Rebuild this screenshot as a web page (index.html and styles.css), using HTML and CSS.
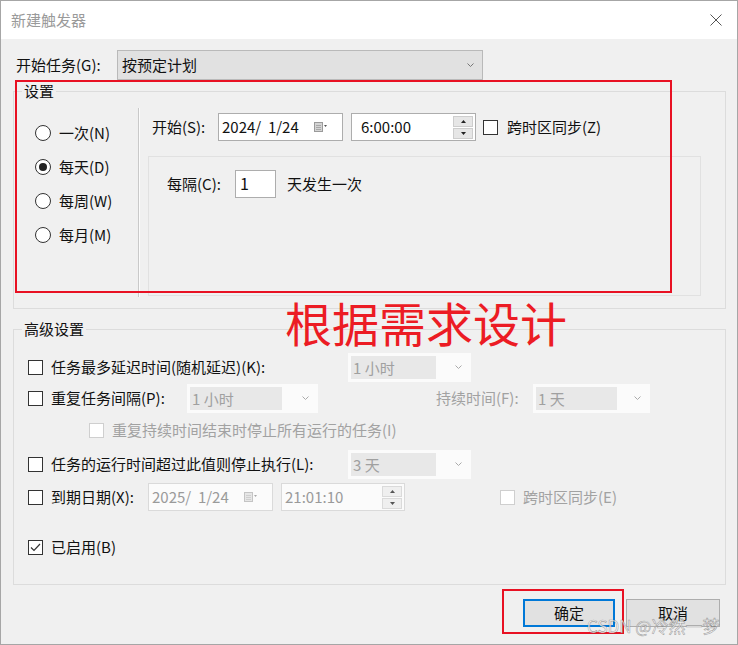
FILE: index.html
```html
<!DOCTYPE html>
<html lang="zh-CN">
<head>
<meta charset="utf-8">
<title>新建触发器</title>
<link rel="stylesheet" href="styles.css">
</head>
<body>
<div class="screen">
  <div class="window">
    <div class="titlebar">
      <span class="title">新建触发器</span>
      <svg class="close" width="12" height="12" viewBox="0 0 12 12"><path d="M0.5 0.5 L11.5 11.5 M11.5 0.5 L0.5 11.5" stroke="#555" stroke-width="1" fill="none"/></svg>
    </div>
    <div class="content">
      <div class="begin-row">
        <span class="begin-label">开始任务(G):</span>
        <div class="combo main-combo">
          <span>按预定计划</span>
          <svg class="chev" width="7" height="4" viewBox="0 0 7 4"><path d="M0.5 0.5 L3.5 3.5 L6.5 0.5" stroke="#777" stroke-width="1" fill="none"/></svg>
        </div>
      </div>

      <fieldset class="group settings">
        <legend>设置</legend>
        <div class="settings-body">
          <div class="radios">
            <div class="radio-row"><span class="radio"></span><span>一次(N)</span></div>
            <div class="radio-row"><span class="radio checked"></span><span>每天(D)</span></div>
            <div class="radio-row"><span class="radio"></span><span>每周(W)</span></div>
            <div class="radio-row"><span class="radio"></span><span>每月(M)</span></div>
          </div>
          <div class="vsep"></div>
          <div class="sched">
            <div class="start-row">
              <span class="start-label">开始(S):</span>
              <div class="field date">
                <span class="val">2024/  1/24</span>
                <svg class="cal" width="14" height="10" viewBox="0 0 14 10"><rect x="0.5" y="0.5" width="8" height="9" fill="#d4d4d4" stroke="#9a9a9a"/><path d="M2 3.5 H7 M2 5.5 H7 M2 7.5 H7" stroke="#a8a8a8"/><path d="M10 3 L13 3 L11.5 5 Z" fill="#555"/></svg>
              </div>
              <div class="field time">
                <span class="val">6:00:00</span>
                <div class="spin">
                  <span class="spin-btn"><svg width="5" height="3" viewBox="0 0 5 3"><path d="M0 3 L2.5 0 L5 3 Z" fill="#222"/></svg></span>
                  <span class="spin-btn"><svg width="5" height="3" viewBox="0 0 5 3"><path d="M0 0 L2.5 3 L5 0 Z" fill="#222"/></svg></span>
                </div>
              </div>
              <span class="check"></span>
              <span class="check-label">跨时区同步(Z)</span>
            </div>
            <div class="panel">
              <div class="every-row">
                <span class="every-label">每隔(C):</span>
                <div class="field num">1</div>
                <span>天发生一次</span>
              </div>
            </div>
          </div>
        </div>
      </fieldset>

      <fieldset class="group advanced">
        <legend>高级设置</legend>
        <div class="adv-body">
          <div class="adv-row r1">
            <span class="check"></span>
            <span class="adv-label w-long">任务最多延迟时间(随机延迟)(K):</span>
            <div class="dcombo w123"><span class="dtext">1 小时</span><svg class="chev" width="7" height="4" viewBox="0 0 7 4"><path d="M0.5 0.5 L3.5 3.5 L6.5 0.5" stroke="#aaa" stroke-width="1" fill="none"/></svg></div>
          </div>
          <div class="adv-row r2">
            <span class="check"></span>
            <span class="adv-label w-repeat">重复任务间隔(P):</span>
            <div class="dcombo w131"><span class="dtext">1 小时</span><svg class="chev" width="7" height="4" viewBox="0 0 7 4"><path d="M0.5 0.5 L3.5 3.5 L6.5 0.5" stroke="#aaa" stroke-width="1" fill="none"/></svg></div>
            <span class="adv-label dis w-dur">持续时间(F):</span>
            <div class="dcombo w117"><span class="dtext">1 天</span><svg class="chev" width="7" height="4" viewBox="0 0 7 4"><path d="M0.5 0.5 L3.5 3.5 L6.5 0.5" stroke="#aaa" stroke-width="1" fill="none"/></svg></div>
          </div>
          <div class="adv-row r3">
            <span class="check disabled"></span>
            <span class="adv-label dis">重复持续时间结束时停止所有运行的任务(I)</span>
          </div>
          <div class="adv-row r4">
            <span class="check"></span>
            <span class="adv-label w-long">任务的运行时间超过此值则停止执行(L):</span>
            <div class="dcombo w123"><span class="dtext">3 天</span><svg class="chev" width="7" height="4" viewBox="0 0 7 4"><path d="M0.5 0.5 L3.5 3.5 L6.5 0.5" stroke="#aaa" stroke-width="1" fill="none"/></svg></div>
          </div>
          <div class="adv-row r5">
            <span class="check"></span>
            <span class="adv-label w-exp">到期日期(X):</span>
            <div class="field date dfield">
              <span class="val">2025/  1/24</span>
              <svg class="cal" width="14" height="10" viewBox="0 0 14 10"><rect x="0.5" y="0.5" width="8" height="9" fill="#e6e6e6" stroke="#c4c4c4"/><path d="M2 3.5 H7 M2 5.5 H7 M2 7.5 H7" stroke="#cfcfcf"/><path d="M10 3 L13 3 L11.5 5 Z" fill="#aaa"/></svg>
            </div>
            <div class="field time dfield exp-time">
              <span class="val">21:01:10</span>
              <div class="spin">
                <span class="spin-btn"><svg width="5" height="3" viewBox="0 0 5 3"><path d="M0 3 L2.5 0 L5 3 Z" fill="#555"/></svg></span>
                <span class="spin-btn"><svg width="5" height="3" viewBox="0 0 5 3"><path d="M0 0 L2.5 3 L5 0 Z" fill="#555"/></svg></span>
              </div>
            </div>
            <span class="check disabled"></span>
            <span class="adv-label dis">跨时区同步(E)</span>
          </div>
          <div class="adv-row r6">
            <span class="check on"><svg width="13" height="13" viewBox="0 0 13 13"><path d="M2 6.5 L5 9.5 L11 3" stroke="#333" stroke-width="1.2" fill="none"/></svg></span>
            <span class="adv-label">已启用(B)</span>
          </div>
        </div>
      </fieldset>

      <div class="buttons">
        <button class="btn primary">确定</button>
        <button class="btn">取消</button>
      </div>
    </div>
  </div>

  <div class="mark mark-settings"></div>
  <div class="mark mark-ok"></div>
  <div class="annotation">根据需求设计</div>
  <div class="watermark">CSDN @冷然一梦</div>
</div>
</body>
</html>
```

FILE: styles.css
```css
* { box-sizing: border-box; }

body {
  margin: 0;
  font-family: "Noto Sans CJK SC", "Microsoft YaHei", sans-serif;
  font-size: 15px;
  line-height: 20px;
  color: #111;
}

.screen {
  position: relative;
  width: 738px;
  height: 645px;
  overflow: hidden;
}

.window {
  width: 738px;
  height: 645px;
  border: 1px solid #a6a6a6;
  background: #f0f0f0;
  display: flex;
  flex-direction: column;
}

.titlebar {
  height: 38px;
  flex: none;
  background: #fff;
  display: flex;
  align-items: center;
  justify-content: space-between;
  padding: 0 15px 0 10px;
}

.title { color: #9a9a9a; }
.close { display: block; }

.content {
  padding: 11px 11px 0 12px;
}

/* begin row */
.begin-row {
  display: flex;
  align-items: center;
  height: 30px;
}
.begin-label {
  width: 101px;
  margin-left: 3px;
}
.combo {
  display: flex;
  align-items: center;
  justify-content: space-between;
}
.main-combo {
  width: 366px;
  height: 30px;
  background: #e1e1e1;
  border: 1px solid #b9b9b9;
  padding: 0 8px 0 4px;
}
.chev { display: block; flex: none; }

/* group boxes */
.group {
  margin: 0;
  padding: 0;
  min-width: 0;
  border: 1px solid #dcdcdc;
}
.group legend {
  margin-left: 8px;
  padding: 0 2px;
  line-height: 20px;
}

.settings { margin-top: 1px; }

.settings-body {
  display: flex;
  height: 207px;
}

.radios {
  width: 124px;
  flex: none;
  padding: 15px 0 0 21px;
}
.radio-row {
  height: 34px;
  display: flex;
  align-items: center;
  gap: 8px;
}
.radio {
  width: 16px;
  height: 16px;
  border-radius: 50%;
  border: 1px solid #333;
  background: #fff;
  flex: none;
  display: flex;
  align-items: center;
  justify-content: center;
}
.radio.checked::after {
  content: "";
  width: 8px;
  height: 8px;
  border-radius: 50%;
  background: #222;
}

.vsep {
  width: 2px;
  flex: none;
  margin: 7px 0 11px;
  border-left: 1px solid #c9c9c9;
  border-right: 1px solid #fbfbfb;
}

.sched {
  flex: 1;
  margin: 0 24px 0 8px;
}

.start-row {
  margin-top: 12px;
  height: 28px;
  display: flex;
  align-items: center;
  padding-left: 4px;
}
.start-label { width: 66px; }

.field {
  height: 28px;
  background: #fff;
  border: 1px solid #adadad;
  display: flex;
  align-items: center;
  flex: none;
}
.val { white-space: pre; }
.date {
  width: 125px;
  margin-right: 8px;
  padding: 0 14px 0 3px;
  justify-content: space-between;
}
.cal { display: block; }
.time {
  width: 125px;
  margin-right: 7px;
  padding: 0 2px 0 9px;
  justify-content: space-between;
}
.spin {
  display: flex;
  flex-direction: column;
  gap: 1px;
}
.spin-btn {
  width: 20px;
  height: 11px;
  background: #e6e6e6;
  border: 1px solid #cdcdcd;
  display: flex;
  align-items: center;
  justify-content: center;
}
.spin-btn svg { display: block; }

.check {
  width: 15px;
  height: 15px;
  border: 1px solid #333;
  background: #fff;
  flex: none;
  display: flex;
  align-items: center;
  justify-content: center;
}
.check svg { display: block; }
.check.disabled { border-color: #cfcfcf; }
.check-label { margin-left: 9px; }

.panel {
  margin-top: 15px;
  height: 140px;
  border: 1px solid #e1e1e1;
  padding: 13px 0 0 18px;
}
.every-row {
  display: flex;
  align-items: center;
  height: 28px;
}
.every-label { width: 68px; }
.num {
  width: 41px;
  margin-right: 11px;
  align-items: flex-start;
  padding: 2px 0 0 4px;
  font-size: 16px;
}

/* advanced */
.advanced { margin-top: 10px; }
.adv-body {
  padding: 0 0 22px 14px;
}
.adv-row {
  display: flex;
  align-items: center;
  height: 30px;
}
.r1 { margin-top: 13px; }
.r2 { margin-top: 1px; }
.r3 { margin-top: 2px; padding-left: 61px; }
.r4 { margin-top: 4px; }
.r5 { margin-top: 3px; }
.r6 { margin-top: 20px; }

.adv-label { margin-left: 8px; white-space: nowrap; }
.adv-label.dis { color: #a2a2a2; }
.w-long { width: 297px; flex: none; }
.w-repeat { width: 136px; flex: none; }
.w-dur { width: 97px; flex: none; margin-left: 118px; }
.w-exp { width: 97px; flex: none; }

.dcombo {
  height: 29px;
  background: #fbfbfb;
  display: flex;
  align-items: center;
  justify-content: space-between;
  padding: 2px 9px 2px 3px;
  flex: none;
}
.dtext {
  background: #e8e8e8;
  color: #a0a0a0;
  height: 23px;
  line-height: 23px;
  padding-left: 2px;
  width: 77%;
  white-space: nowrap;
}
.w123 { width: 123px; }
.w131 { width: 131px; }
.w117 { width: 117px; }

.dfield {
  border-color: #dadada;
  background: #fbfbfb;
  color: #9a9a9a;
}
.dfield .spin-btn { border-color: #dadada; background: #efefef; }
.exp-time {
  width: 124px;
  margin-right: 95px;
  padding-left: 3px;
}

/* buttons */
.buttons {
  margin-top: 14px;
  display: flex;
  justify-content: flex-end;
  gap: 11px;
  padding-right: 6px;
}
.btn {
  height: 28px;
  width: 94px;
  font: inherit;
  color: #111;
  background: #e1e1e1;
  border: 1px solid #adadad;
  padding: 0;
}
.btn.primary {
  width: 92px;
  border: 2px solid #0078d7;
}

/* annotation overlays */
.mark {
  position: absolute;
  border: 2px solid #e81123;
}
.mark-settings {
  left: 15px;
  top: 80px;
  width: 657px;
  height: 213px;
}
.mark-ok {
  left: 502px;
  top: 589px;
  width: 122px;
  height: 45px;
}
.annotation {
  position: absolute;
  left: 285px;
  top: 298px;
  font-size: 47px;
  line-height: 47px;
  color: #ec1c24;
  white-space: nowrap;
}
.watermark {
  position: absolute;
  left: 587px;
  top: 615px;
  font-size: 17px;
  line-height: 22px;
  color: rgba(255, 255, 255, 0.75);
  -webkit-text-stroke: 0.6px rgba(90, 90, 90, 0.55);
  white-space: nowrap;
}
```
